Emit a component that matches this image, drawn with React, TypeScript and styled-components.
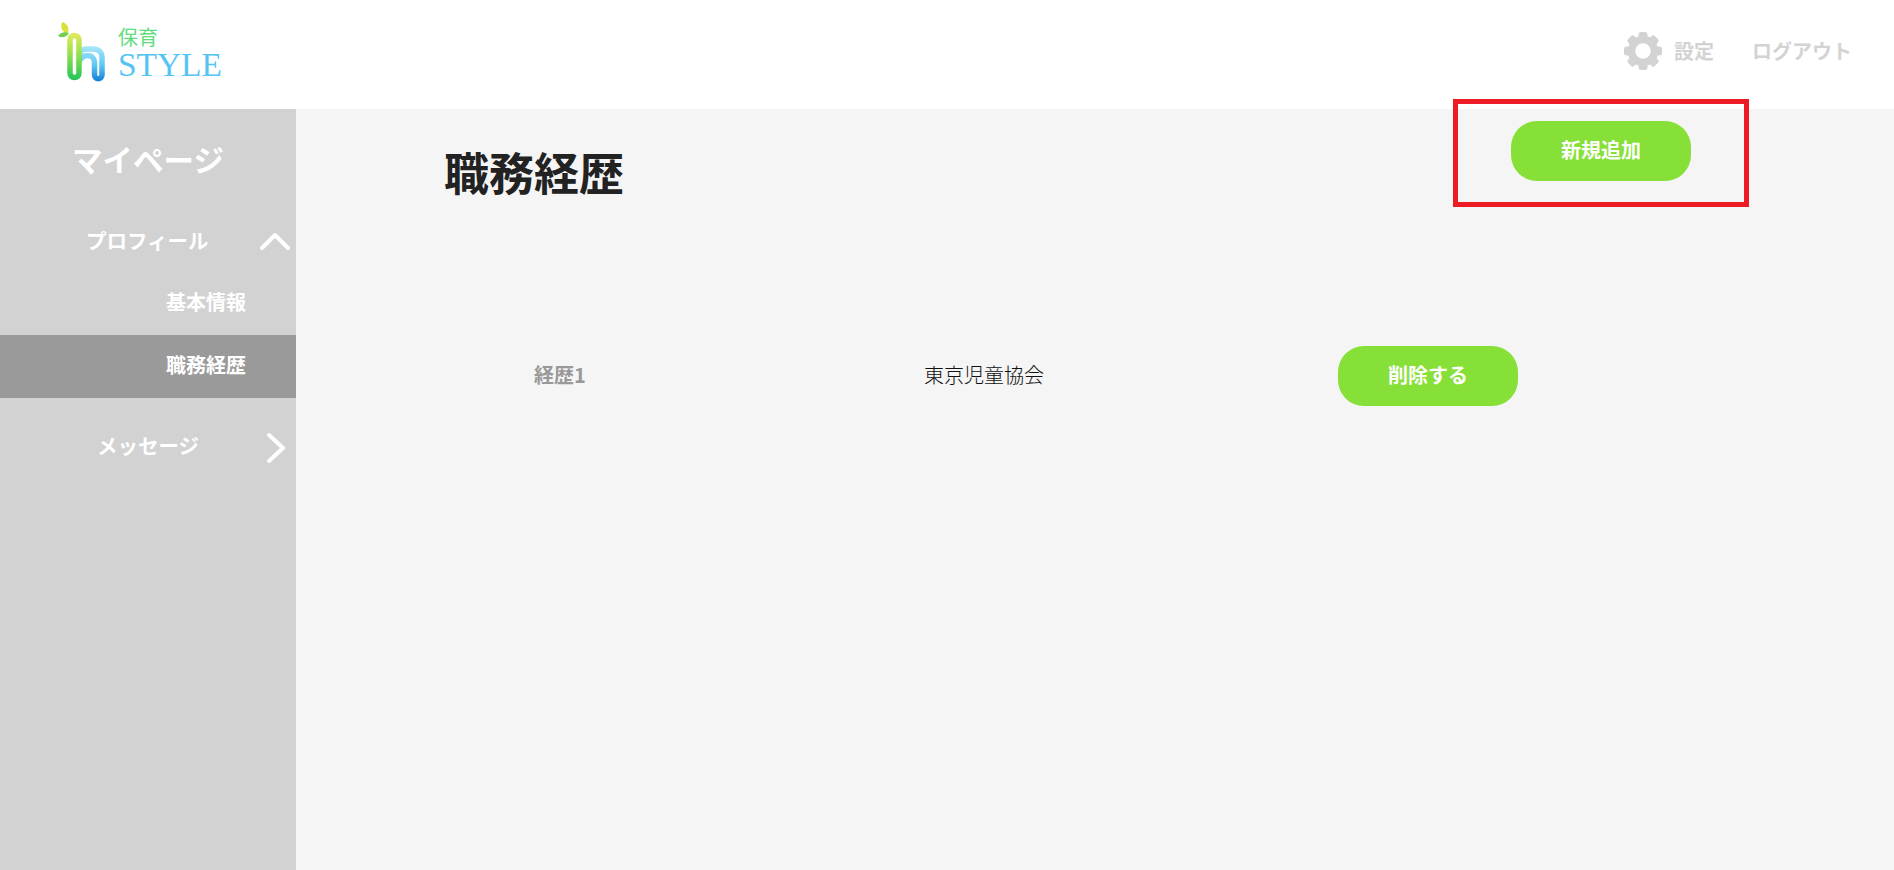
import React from 'react';
import styled, { createGlobalStyle } from 'styled-components';

const GlobalStyle = createGlobalStyle`
  html, body {
    margin: 0;
    padding: 0;
    height: 100%;
    background: #f5f5f5;
  }
  body {
    font-family: "Noto Sans CJK JP", "Liberation Sans", sans-serif;
    overflow: hidden;
  }
`;

const Page = styled.div`
  width: 100%;
  height: 870px;
  display: flex;
  flex-direction: column;
`;

const Header = styled.header`
  height: 109px;
  flex: none;
  background: #fff;
  display: flex;
  align-items: center;
  justify-content: space-between;
  padding: 0 42px 0 54px;
`;

const LogoLink = styled.a`
  align-self: flex-start;
  display: flex;
  align-items: flex-start;
  gap: 4px;
  margin-top: 18px;
`;

const LogoText = styled.div`
  display: flex;
  flex-direction: column;
  margin-top: 6px;
`;

const LogoKana = styled.span`
  font-size: 20px;
  line-height: 26px;
  color: #62dc7c;
`;

const LogoWord = styled.span`
  font-family: "Liberation Serif", serif;
  font-size: 33.400px;
  line-height: 28px;
  margin-top: 1px;
  color: #55c4f2;
`;

const HeaderNav = styled.nav`
  display: flex;
  align-items: center;
  margin-top: -7px;
`;

const HeaderLink = styled.a`
  font-size: 20px;
  font-weight: 700;
  line-height: 30px;
  color: #d3d3d3;
  margin-left: 12px;

  & + & {
    margin-left: 38px;
  }
`;

const Body = styled.div`
  flex: 1;
  display: flex;
  min-height: 0;
`;

const Sidebar = styled.aside`
  width: 296px;
  flex: none;
  background: #d2d2d2;
  color: #fff;
  padding-top: 27px;
`;

const SidebarTitle = styled.h2`
  margin: 0 0 0 72px;
  font-size: 30.5px;
  line-height: 46px;
  font-weight: 700;
`;

const MenuGroup = styled.button`
  all: unset;
  box-sizing: border-box;
  width: 100%;
  height: 63px;
  display: flex;
  align-items: center;
  justify-content: space-between;
  font-size: 20.5px;
  font-weight: 700;
  padding-left: ${p => p.$indent}px;
  padding-right: ${p => p.$iconRight}px;
  padding-bottom: 2px;
`;

const GroupBlock = styled.div`
  margin-top: ${p => p.$top}px;
`;

const SubItem = styled.a`
  height: 63px;
  box-sizing: border-box;
  display: flex;
  align-items: center;
  padding: 0 0 4px 166px;
  font-size: 20px;
  font-weight: 700;
  background: ${p => (p.$active ? '#9a9a9a' : 'transparent')};
`;

const Main = styled.main`
  flex: 1;
  padding: 12px 203px 0 149px;
`;

const TitleBar = styled.div`
  display: flex;
  align-items: flex-start;
  justify-content: space-between;
`;

const Title = styled.h1`
  margin: 19px 0 0 -1px;
  font-size: 45px;
  line-height: 64px;
  font-weight: 700;
  color: #222;
`;

const PillButton = styled.button`
  width: 180px;
  height: 60px;
  border: 0;
  border-radius: 26px;
  background: #87e037;
  color: #fff;
  font-family: inherit;
  font-size: 20px;
  font-weight: 700;
  padding: 0 0 4px;
`;

const AddButtonWrap = styled.div`
  position: relative;
`;

const Highlight = styled.div`
  position: absolute;
  inset: -22px -58px -26px;
  border: 5px solid #ed1c24;
  pointer-events: none;
`;

const CareerRow = styled.div`
  display: grid;
  grid-template-columns: 230px 618px 225px;
  align-items: center;
  margin-top: 142px;
`;

const CareerLabel = styled.div`
  text-align: center;
  font-size: 20px;
  font-weight: 700;
  color: #999;
  padding-bottom: 4px;
`;

const CareerName = styled.div`
  text-align: center;
  font-size: 20px;
  font-weight: 300;
  color: #111;
  padding-bottom: 4px;
`;

const RowAction = styled.div`
  justify-self: end;
`;

const ChevronSlot = styled.span`
  display: flex;
  margin-top: ${p => p.$top}px;
`;

const Logo = () => (
  <svg width="60" height="68" viewBox="0 0 60 68" aria-hidden>
    <defs>
      <linearGradient id="stem" gradientUnits="userSpaceOnUse" x1="0" y1="15" x2="0" y2="62">
        <stop offset="0" stopColor="#e4ea5c" />
        <stop offset="0.45" stopColor="#96e04c" />
        <stop offset="1" stopColor="#22c45a" />
      </linearGradient>
      <linearGradient id="hump" gradientUnits="userSpaceOnUse" x1="0" y1="29" x2="0" y2="62">
        <stop offset="0" stopColor="#a6e6f8" />
        <stop offset="0.55" stopColor="#5cc8f2" />
        <stop offset="1" stopColor="#1a84d8" />
      </linearGradient>
    </defs>
    <path d="M13 16C7 13 6 8 8.500 4c4.500 1.500 8 6.500 4.500 12z" fill="#dbe03c" />
    <path d="M4 18c2.500-4 7-4.500 11-3C12 19.500 8 20.500 4 18z" fill="#6fce4f" />
    <path
      d="M25 36c1-3 4-5 8-5h6c6 0 9 4 9 8v18a3.750 3.750 0 0 1-7.500 0V44c0-4-3-6.500-7-6.500-4.500 0-7 2.500-8.500 6.500"
      fill="none"
      stroke="url(#hump)"
      strokeWidth="5.500"
      strokeLinecap="round"
    />
    <rect x="16" y="17.500" width="9" height="42" rx="4.500" fill="none" stroke="url(#stem)" strokeWidth="5.500" />
  </svg>
);

const GEAR_TEETH = [0, 45, 90, 135, 180, 225, 270, 315];

const Gear = () => (
  <svg width="38" height="38" viewBox="0 0 38 38" aria-hidden>
    <circle cx="19" cy="19" r="11.500" fill="none" stroke="#d3d3d3" strokeWidth="7.500" />
    {GEAR_TEETH.map(angle => (
      <rect key={angle} x="14.500" y="0" width="9" height="10" rx="2.500" fill="#d3d3d3" transform={`rotate(${angle} 19 19)`} />
    ))}
  </svg>
);

const ChevronUp = () => (
  <svg width="30" height="20" viewBox="0 0 30 20" aria-hidden>
    <path d="M2 17 15 4l13 13" fill="none" stroke="#fff" strokeWidth="4" strokeLinecap="round" strokeLinejoin="round" />
  </svg>
);

const ChevronRight = () => (
  <svg width="20" height="32" viewBox="0 0 20 32" aria-hidden>
    <path d="M3 3l14 13L3 29" fill="none" stroke="#fff" strokeWidth="4" strokeLinecap="round" strokeLinejoin="round" />
  </svg>
);

export default function App() {
  return (
    <Page>
      <GlobalStyle />
      <Header>
        <LogoLink>
          <Logo />
          <LogoText>
            <LogoKana>保育</LogoKana>
            <LogoWord>STYLE</LogoWord>
          </LogoText>
        </LogoLink>
        <HeaderNav>
          <Gear />
          <HeaderLink>設定</HeaderLink>
          <HeaderLink>ログアウト</HeaderLink>
        </HeaderNav>
      </Header>
      <Body>
        <Sidebar>
          <SidebarTitle>マイページ</SidebarTitle>
          <GroupBlock $top={27}>
            <MenuGroup $indent={86} $iconRight={6}>
              プロフィール
              <ChevronSlot $top={2}>
                <ChevronUp />
              </ChevronSlot>
            </MenuGroup>
          </GroupBlock>
          <SubItem>基本情報</SubItem>
          <SubItem $active>職務経歴</SubItem>
          <GroupBlock $top={16}>
            <MenuGroup $indent={97} $iconRight={10}>
              メッセージ
              <ChevronSlot $top={6}>
                <ChevronRight />
              </ChevronSlot>
            </MenuGroup>
          </GroupBlock>
        </Sidebar>
        <Main>
          <TitleBar>
            <Title>職務経歴</Title>
            <AddButtonWrap>
              <PillButton>新規追加</PillButton>
              <Highlight />
            </AddButtonWrap>
          </TitleBar>
          <CareerRow>
            <CareerLabel>経歴1</CareerLabel>
            <CareerName>東京児童協会</CareerName>
            <RowAction>
              <PillButton>削除する</PillButton>
            </RowAction>
          </CareerRow>
        </Main>
      </Body>
    </Page>
  );
}
